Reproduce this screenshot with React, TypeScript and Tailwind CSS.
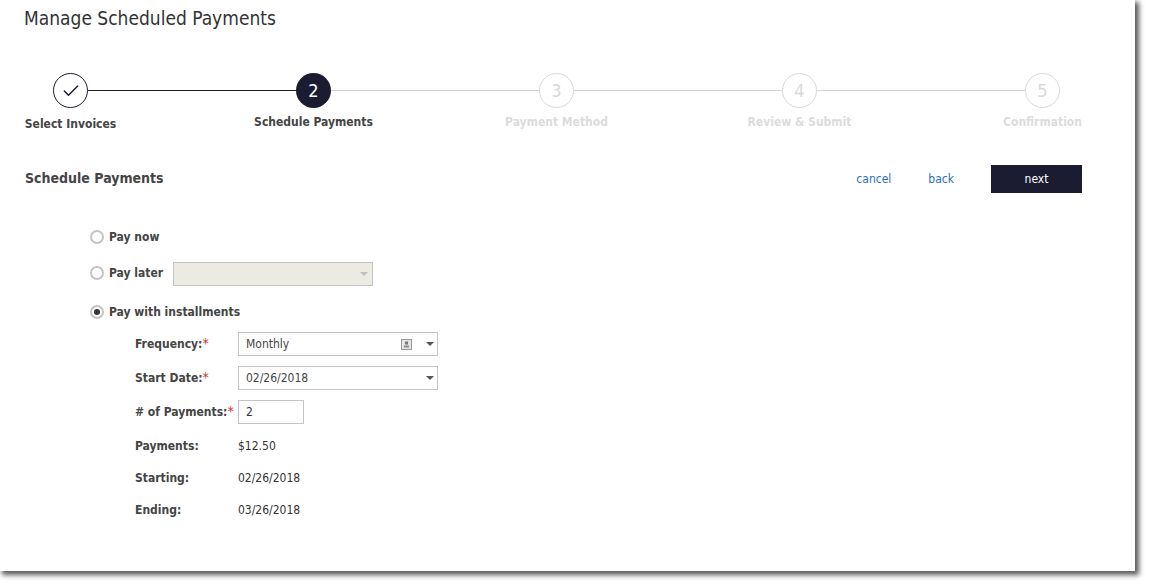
import { Check } from 'lucide-react'

const font = "font-['DejaVu_Sans_Condensed','DejaVu_Sans',sans-serif]"

function Step({ n, label }: { n: number; label: string }) {
  return (
    <div className="flex flex-col items-center w-[35px] shrink-0">
      <div className="w-[35px] h-[35px] rounded-full border border-[#d9d9d9] bg-white flex items-center justify-center text-[18px] text-[#d9d9d9]">
        {n}
      </div>
      <div className="mt-[6px] text-[12px] leading-[16px] font-bold whitespace-nowrap text-[#dcdcdc]">{label}</div>
    </div>
  )
}

function Arrow({ color = 'border-t-[#555]' }: { color?: string }) {
  return <span className={`w-0 h-0 border-x-[4px] border-x-transparent border-t-[4px] ${color}`} />
}

function Radio({ checked }: { checked?: boolean }) {
  return (
    <span className="w-[14px] h-[14px] rounded-full border-2 border-[#c4c4c4] bg-white flex items-center justify-center shrink-0">
      {checked && <span className="w-[6px] h-[6px] rounded-full bg-[#333]" />}
    </span>
  )
}

function Label({ text, required }: { text: string; required?: boolean }) {
  return (
    <div className="w-[103px] shrink-0 text-[12px] font-bold text-[#444] whitespace-nowrap">
      {text}
      {required && <span className="text-[14px] leading-[12px] text-[#d9302c] font-normal">*</span>}
    </div>
  )
}

export default function App() {
  return (
    <div className={`w-[1150px] h-[586px] bg-white overflow-hidden ${font}`}>
      <div className="w-[1135px] h-[571px] bg-white shadow-[3px_3px_5px_1px_rgba(0,0,0,0.65)] pl-[24px] pr-[53px] flex flex-col">
        <h1 className="mt-[5px] text-[19px] leading-[26px] text-[#333]">Manage Scheduled Payments</h1>

        {/* stepper */}
        <div className="mt-[42px] ml-[29px] mr-[22px] flex h-[64px]">
          <div className="flex flex-col items-center w-[35px] shrink-0">
            <div className="w-[35px] h-[35px] rounded-full border border-[#1b1c32] bg-white flex items-center justify-center">
              <Check className="w-[20px] h-[20px] text-[#1b1c32]" strokeWidth={1.75} />
            </div>
            <div className="mt-[8px] text-[12px] leading-[16px] font-bold whitespace-nowrap text-[#444]">Select Invoices</div>
          </div>
          <div className="flex-1 h-px mt-[17px] bg-[#1b1c32]" />
          <div className="flex flex-col items-center w-[35px] shrink-0">
            <div className="w-[35px] h-[35px] rounded-full bg-[#1b1c32] flex items-center justify-center text-[18px] font-medium text-white">
              2
            </div>
            <div className="mt-[6px] text-[12px] leading-[16px] font-bold whitespace-nowrap text-[#444]">Schedule Payments</div>
          </div>
          <div className="flex-1 h-px mt-[17px] bg-[#d4d4d4]" />
          <Step n={3} label="Payment Method" />
          <div className="flex-1 h-px mt-[17px] bg-[#d4d4d4]" />
          <Step n={4} label="Review & Submit" />
          <div className="flex-1 h-px mt-[17px] bg-[#d4d4d4]" />
          <Step n={5} label="Confirmation" />
        </div>

        {/* header row */}
        <div className="mt-[28px] flex items-center h-[28px]">
          <h2 className="ml-px mb-[2px] text-[14px] font-bold text-[#444]">Schedule Payments</h2>
          <a className="ml-auto text-[12px] text-[#2a6ebb]">cancel</a>
          <a className="ml-[37px] text-[12px] text-[#2a6ebb]">back</a>
          <button className="ml-[37px] w-[91px] h-[28px] bg-[#1b1c32] text-white text-[12px]">next</button>
        </div>

        {/* form */}
        <div className="mt-[33px] ml-[66px] flex flex-col text-[12px]">
          <div className="flex items-center gap-[5px] h-[22px]">
            <Radio />
            <span className="font-bold text-[#444]">Pay now</span>
          </div>
          <div className="mt-[12px] flex items-center gap-[5px] h-[26px]">
            <Radio />
            <span className="font-bold text-[#444]">Pay later</span>
            <div className="ml-[5px] mt-[2px] w-[200px] h-[24px] bg-[#ebebe4] border border-[#c4c4c4] flex items-center justify-end pr-[4px]">
              <Arrow color="border-t-[#c0c0c0]" />
            </div>
          </div>
          <div className="mt-[15px] flex items-center gap-[5px] h-[22px]">
            <Radio checked />
            <span className="font-bold text-[#444]">Pay with installments</span>
          </div>

          <div className="ml-[45px] mt-[9px] flex flex-col">
            <div className="flex items-center h-[24px]">
              <Label text="Frequency:" required />
              <div className="w-[200px] h-[24px] border border-[#c4c4c4] flex items-center pl-[7px] pr-[3px] text-[#444]">
                <span>Monthly</span>
                <span className="ml-auto mr-[14px]">
                  <svg width="11" height="11" viewBox="0 0 11 11">
                    <rect x="0.5" y="0.5" width="10" height="10" fill="#e4e4e4" stroke="#9a9a9a" />
                    <rect x="4" y="2.5" width="3" height="3" fill="#777" />
                    <rect x="3" y="6.5" width="5" height="2" fill="#8a8a8a" />
                  </svg>
                </span>
                <Arrow />
              </div>
            </div>
            <div className="mt-[10px] flex items-center h-[24px]">
              <Label text="Start Date:" required />
              <div className="w-[200px] h-[24px] border border-[#c4c4c4] flex items-center justify-between pl-[7px] pr-[3px] text-[#444]">
                <span>02/26/2018</span>
                <Arrow />
              </div>
            </div>
            <div className="mt-[10px] flex items-center h-[24px]">
              <Label text="# of Payments:" required />
              <div className="w-[66px] h-[24px] border border-[#c4c4c4] flex items-center pl-[7px] text-[#333]">2</div>
            </div>
            <div className="mt-[11px] flex items-center h-[22px]">
              <Label text="Payments:" />
              <span className="text-[#333]">$12.50</span>
            </div>
            <div className="mt-[10px] flex items-center h-[22px]">
              <Label text="Starting:" />
              <span className="text-[#333]">02/26/2018</span>
            </div>
            <div className="mt-[10px] flex items-center h-[22px]">
              <Label text="Ending:" />
              <span className="text-[#333]">03/26/2018</span>
            </div>
          </div>
        </div>
      </div>
    </div>
  )
}
